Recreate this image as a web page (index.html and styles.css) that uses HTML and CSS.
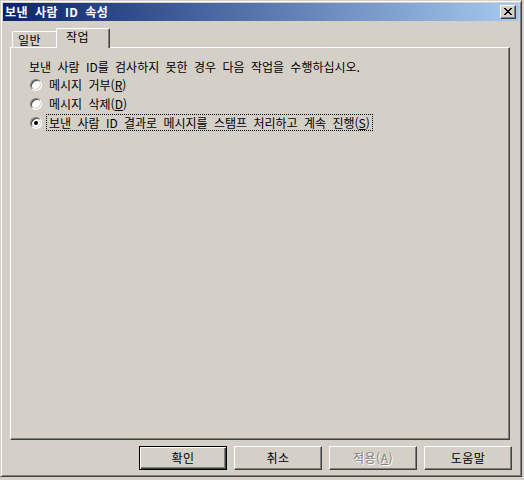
FILE: index.html
```html
<!DOCTYPE html>
<html lang="ko">
<head>
<meta charset="utf-8">
<title>보낸 사람 ID 속성</title>
<link rel="stylesheet" href="styles.css">
</head>
<body>
<div class="window">
  <div class="titlebar">
    <span class="title">보낸 사람 ID 속성</span>
    <span class="close">
      <svg width="8" height="7" viewBox="0 0 8 7" shape-rendering="crispEdges">
        <path d="M0 0h2v1H0zM6 0h2v1H6zM1 1h2v1H1zM5 1h2v1H5zM2 2h4v1H2zM3 3h2v1H3zM2 4h4v1H2zM1 5h2v1H1zM5 5h2v1H5zM0 6h2v1H0zM6 6h2v1H6z" fill="#000"/>
      </svg>
    </span>
  </div>
  <div class="body">
    <div class="tabs">
      <div class="tab">일반</div>
      <div class="tab active">작업</div>
    </div>
    <div class="panel">
      <div class="heading">보낸 사람 ID를 검사하지 못한 경우 다음 작업을 수행하십시오.</div>
      <div class="option"><span class="radio"></span><span class="label">메시지 거부(<u>R</u>)</span></div>
      <div class="option"><span class="radio"></span><span class="label">메시지 삭제(<u>D</u>)</span></div>
      <div class="option"><span class="radio checked"></span><span class="label focus">보낸 사람 ID 결과로 메시지를 스탬프 처리하고 계속 진행(<u>S</u>)</span></div>
    </div>
    <div class="buttons">
      <div class="btn default"><span>확인</span></div>
      <div class="btn"><span>취소</span></div>
      <div class="btn disabled"><span>적용(<u>A</u>)</span></div>
      <div class="btn"><span>도움말</span></div>
    </div>
  </div>
</div>
</body>
</html>
```

FILE: styles.css
```css
html, body {
  margin: 0;
  padding: 0;
  background: #d4d0c8;
}

body {
  font-family: "Noto Sans CJK KR", "Noto Sans", sans-serif;
  font-size: 12px;
  word-spacing: 3px;
  color: #000;
}

.window {
  box-sizing: border-box;
  width: 522px;
  height: 477px;
  background: #d4d0c8;
  border: 1px solid;
  border-color: #d4d0c8 #404040 #404040 #d4d0c8;
  box-shadow: inset 1px 1px #ffffff, inset -1px -1px #808080;
  padding: 2px;
  display: flex;
  flex-direction: column;
}

.titlebar {
  height: 18px;
  background: linear-gradient(to right, #0a246a, #a6caf0);
  display: flex;
  align-items: center;
  justify-content: space-between;
  padding-left: 2px;
  padding-right: 3px;
}

.title {
  color: #fff;
  font-weight: bold;
  font-size: 12px;
  line-height: 18px;
  letter-spacing: 0.5px;
}

.close {
  box-sizing: border-box;
  width: 16px;
  height: 14px;
  background: #d4d0c8;
  border: 1px solid;
  border-color: #ffffff #404040 #404040 #ffffff;
  box-shadow: inset -1px -1px #808080;
  display: flex;
  align-items: center;
  justify-content: center;
  padding-bottom: 1px;
}

.body {
  padding: 7px 0 0 7px;
  display: flex;
  flex-direction: column;
}

.tabs {
  display: flex;
  align-items: flex-end;
  height: 19px;
  padding-left: 2px;
  position: relative;
  z-index: 1;
}

.tab {
  box-sizing: border-box;
  height: 16px;
  width: 46px;
  border-top: 1px solid #fff;
  border-left: 1px solid #fff;
  border-right: 1px solid #404040;
  box-shadow: inset -1px 0 #808080;
  border-radius: 2px 2px 0 0;
  padding-left: 5px;
  line-height: 15px;
  letter-spacing: 0.5px;
  background: #d4d0c8;
}

.tab.active {
  height: 20px;
  width: 54px;
  margin-left: -2px;
  margin-bottom: -1px;
  padding-left: 9px;
  line-height: 16px;
}

.panel {
  box-sizing: border-box;
  width: 500px;
  height: 393px;
  border-top: 1px solid #fff;
  border-left: 1px solid #fff;
  border-right: 1px solid #404040;
  border-bottom: 1px solid #404040;
  box-shadow: inset -1px -1px #808080;
  padding: 10px 0 0 18px;
  display: flex;
  flex-direction: column;
}

.heading {
  height: 17px;
  line-height: 17px;
}

.option {
  height: 19px;
  display: flex;
  align-items: center;
  margin-left: 1px;
}

.radio {
  box-sizing: border-box;
  width: 12px;
  height: 12px;
  border-radius: 50%;
  background: #fff;
  border: 1px solid;
  border-color: #808080 #ffffff #ffffff #808080;
  box-shadow: inset 1px 1px #404040, inset -1px -1px #d4d0c8;
  display: flex;
  align-items: center;
  justify-content: center;
  margin-right: 4px;
}

.radio.checked::after {
  content: "";
  width: 4px;
  height: 4px;
  border-radius: 50%;
  background: #000;
}

.label {
  padding: 0 2px;
  line-height: 15px;
  border: 1px solid transparent;
}

.label.focus {
  border: 1px dotted #000;
}

.buttons {
  display: flex;
  justify-content: flex-end;
  gap: 7px;
  padding-right: 7px;
  margin-top: 6px;
}

.btn {
  box-sizing: border-box;
  width: 88px;
  height: 24px;
  border: 1px solid;
  border-color: #ffffff #404040 #404040 #ffffff;
  box-shadow: inset -1px -1px #808080;
  display: flex;
  align-items: center;
  justify-content: center;
  line-height: 16px;
  letter-spacing: 0.5px;
}

.btn.default {
  border: 1px solid #000;
  box-shadow: inset 1px 1px #fff, inset -1px -1px #404040, inset -2px -2px #808080;
}

.btn.disabled {
  color: #808080;
  text-shadow: 1px 1px #fff;
}
```
